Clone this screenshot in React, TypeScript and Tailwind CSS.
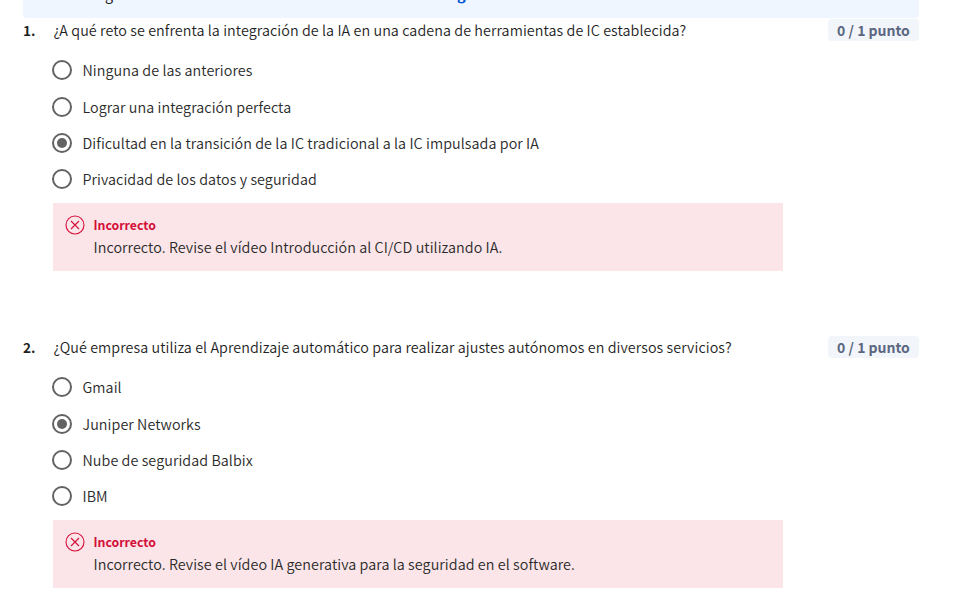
type QuizQuestion = {
  number: string;
  text: string;
  options: string[];
  selected: number;
  feedback: string;
};

const questions: QuizQuestion[] = [
  {
    number: '1.',
    text: '¿A qué reto se enfrenta la integración de la IA en una cadena de herramientas de IC establecida?',
    options: [
      'Ninguna de las anteriores',
      'Lograr una integración perfecta',
      'Dificultad en la transición de la IC tradicional a la IC impulsada por IA',
      'Privacidad de los datos y seguridad',
    ],
    selected: 2,
    feedback: 'Incorrecto. Revise el vídeo Introducción al CI/CD utilizando IA.',
  },
  {
    number: '2.',
    text: '¿Qué empresa utiliza el Aprendizaje automático para realizar ajustes autónomos en diversos servicios?',
    options: ['Gmail', 'Juniper Networks', 'Nube de seguridad Balbix', 'IBM'],
    selected: 1,
    feedback: 'Incorrecto. Revise el vídeo IA generativa para la seguridad en el software.',
  },
];

// Height of each option row, spacing below included
const rowHeights = ['h-[37px]', 'h-[36px]', 'h-[36px]', 'h-[22px]'];

function Radio({ checked }: { checked: boolean }) {
  return (
    <span className="flex size-5 shrink-0 items-center justify-center rounded-full border-2 border-[#636363]">
      {checked && <span className="size-[10px] rounded-full bg-[#636363]" />}
    </span>
  );
}

function ErrorIcon() {
  return (
    <svg className="size-5 shrink-0" viewBox="0 0 20 20" fill="none" stroke="#d30f3a" strokeWidth="1.1">
      <circle cx="10" cy="10" r="9" />
      <path d="M6 6l8 8M14 6l-8 8" />
    </svg>
  );
}

function Question({ q }: { q: QuizQuestion }) {
  return (
    <section className="h-[317px] pl-[23px]">
      <div className="flex h-[22px] w-[896px] items-center">
        <span className="w-[30.5px] text-[13.6px] leading-[22px] font-bold">{q.number}</span>
        <p className="grow text-[14.32px] leading-[22px] font-[350] tracking-[0.073px]">{q.text}</p>
        <span className="h-[22px] w-[91px] rounded-[4px] bg-[#f2f5fa] text-center text-[14px] leading-[22px] font-bold text-[#5b6780]">
          0 / 1 punto
        </span>
      </div>
      <div className="mt-[19px] ml-[29px] h-[143px]">
        {q.options.map((label, i) => (
          <label key={label} className={`flex items-start ${rowHeights[i]}`}>
            <Radio checked={i === q.selected} />
            <span className="ml-[10.5px] text-[14.32px] leading-[20px] font-[350] tracking-[0.073px] text-[#2a2a2a]">{label}</span>
          </label>
        ))}
      </div>
      <div className="ml-[30px] flex h-[68px] w-[730px] bg-[#fbe5e8] pt-[12px] pl-[12px]">
        <ErrorIcon />
        <div className="ml-[8.5px]">
          <p className="h-[22px] text-[12.3px] leading-[21px] font-bold text-[#d30f3a]">Incorrecto</p>
          <p className="text-[14.32px] leading-[20px] font-[350] tracking-[0.073px] text-[#2a2a2a]">{q.feedback}</p>
        </div>
      </div>
    </section>
  );
}

export default function App() {
  return (
    <main className="h-[608px] w-[961px] overflow-hidden bg-white font-['Noto_Sans_CJK_SC',sans-serif] text-[#1f1f1f]">
      <header className="mb-px ml-[23px] flex h-[18px] w-[896px] items-start overflow-hidden rounded-b-[4px] bg-[#f0f6ff] text-[14.32px] leading-[22px]">
        <span className="-mt-[17px] ml-[82px] w-[352px]">g</span>
        <span className="-mt-[17px] text-[14.6px] font-bold text-[#0056d2]">g</span>
      </header>
      {questions.map((q) => (
        <Question key={q.number} q={q} />
      ))}
    </main>
  );
}
